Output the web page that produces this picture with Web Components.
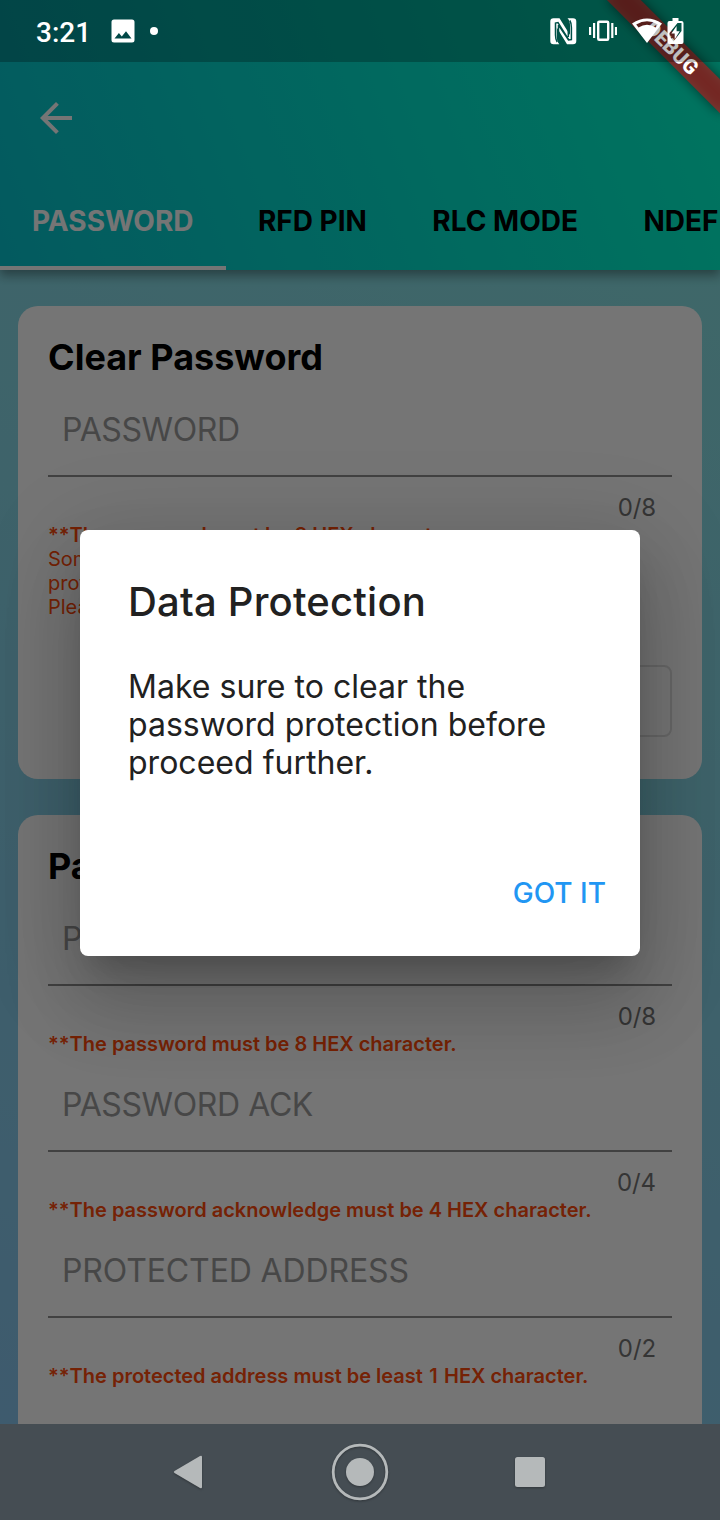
<!DOCTYPE html>
<html lang="en">
<head>
<meta charset="utf-8">
<title>Data Protection</title>
<style>
html,body{margin:0;padding:0}
body{width:720px;height:1520px;overflow:hidden;font-family:Inter,"Liberation Sans",sans-serif;color:#000}
</style>
</head>
<body>
<phone-screen></phone-screen>
<script>
const define = (name, html) => customElements.define(name, class extends HTMLElement {
  constructor() {
    super();
    const t = document.createElement('template');
    t.innerHTML = html;
    this.attachShadow({mode: 'open'}).append(t.content.cloneNode(true));
  }
});

define('status-bar', `
<style>
:host{display:flex;align-items:center;box-sizing:border-box;height:62px;padding:0 36px 0 36px;background:rgba(0,0,0,.25);color:#fff;font:500 28px Roboto,sans-serif}
svg{display:block;flex:none}
.time{width:75px;padding-top:2px}
.dot{width:8px;height:8px;border-radius:50%;background:#fff;margin-left:15px}
.right{display:flex;align-items:center;margin-left:auto}
</style>
<span class="time">3:21</span>
<svg width="24" height="24" viewBox="0 0 24 24" fill="#fff"><path fill-rule="evenodd" d="M3 0.5h18a2.500 2.500 0 0 1 2.500 2.500v18a2.500 2.500 0 0 1-2.500 2.500h-18a2.500 2.500 0 0 1-2.500-2.500v-18a2.500 2.500 0 0 1 2.500-2.500zM3.500 19.500h17l-5.500-7.300-4.200 5.300-2.900-3.500z"/></svg>
<span class="dot"></span>
<span class="right">
<svg width="27" height="27" viewBox="0 0 27 27"><path fill="#fff" d="M3.500 .2H9.500L20 17V8Q20 2.500 17.500 .2H23q3.300 0 3.300 3.200V23q0 3.200-3.300 3.200h-6L6.800 9.500V18Q6.800 24 9.300 26.200H3.500Q.3 26.200.3 23V3.400Q.3.200 3.500.2z"/><path fill="none" stroke="#005048" stroke-width="1.500" d="M7.200 24Q5.500 21.500 5.500 17V5L8 4.500L18.500 21.500M8.500 7V20.500M18.300 5V19M19.800 2.500Q21.400 5 21.400 9.500V21.500L18.500 22L8.500 7"/></svg>
<svg style="margin-left:12px" width="28" height="22" viewBox="0 0 28 22" fill="none" stroke="#fff"><rect x="9.200" y="1.700" width="10" height="18" rx="1" stroke-width="2.400"/><path stroke-width="2.200" d="M5.100 3v15M1.100 7v8M23.300 3v15M27 7v8"/></svg>
<svg style="margin-left:14px" width="32" height="26" viewBox="0 0 32 26"><path fill="#fff" fill-rule="evenodd" d="M1 5.500Q16 -4.500 31 5.500L16 25zM5.200 6.500l2.300 3Q16 4 24.500 9.500l2.300-3Q16 0 5.200 6.500z"/></svg>
<svg style="margin-left:4px" width="17" height="27" viewBox="0 0 17 27"><path fill="#fff" fill-rule="evenodd" d="M5.500 0h6v3h3q2 0 2 2v19q0 2-2 2h-12q-2 0-2-2V5q0-2 2-2h3zM10.500 5L2.500 15v3l4 5.500 8-10.500V5z"/><path fill="#fff" d="M9.600 8L4.400 15.500h3.300v5.800l5-8H9.600z"/></svg>
</span>`);

define('tab-item', `
<style>
:host{display:block;flex:none;box-sizing:border-box;height:96px;padding:28px 33px 0 32.400px;font-weight:700;font-size:28px;line-height:38px;white-space:nowrap}
:host([selected]){padding:28px 32px 0;color:#fff;border-bottom:4px solid #fff}
</style><slot></slot>`);

define('app-header', `
<style>
:host{display:flex;flex-direction:column;justify-content:space-between;position:relative;height:270px;background:linear-gradient(69.4deg,#08c4d0,#00ffcf);box-shadow:0 4px 10px rgba(0,0,0,.3),0 8px 10px rgba(0,0,0,.1)}
.back{margin:102px 0 0 40px;display:block}
nav{display:flex;overflow:hidden}
</style>
<svg class="back" width="32" height="32" viewBox="4 4 16 16" fill="#fff"><path d="M20 11H7.830l5.590-5.590L12 4l-8 8 8 8 1.410-1.410L7.830 13H20v-2z"/></svg>
<nav><tab-item selected>PASSWORD</tab-item><tab-item>RFD PIN</tab-item><tab-item>RLC MODE</tab-item><tab-item>NDEF</tab-item></nav>`);

define('text-field', `
<style>
:host{display:block;height:120px}
.label{box-sizing:border-box;height:76px;padding:9px 14px 0;font-size:32px;letter-spacing:var(--ls,-.4px);line-height:40px;border-bottom:2px solid #8f8f8f;color:#9c9c9c}
.count{text-align:right;padding:16px 16px 0 0;font-size:24px;line-height:30px;letter-spacing:-.1px;color:#747474}
</style>
<div class="label"><slot></slot></div><div class="count"><slot name="count"></slot></div>`);

define('form-note', `
<style>:host{display:block;height:24px;font-size:20px;line-height:24px;font-weight:600;color:#ff4a0c;white-space:nowrap}
:host([plain]){font-weight:400}</style><slot></slot>`);

define('form-card', `
<style>
:host{display:block;box-sizing:border-box;background:#fff;border-radius:20px;padding:30px}
h2{margin:0 0 23px;font-size:36px;line-height:42px;font-weight:700}
</style>
<h2><slot name="title"></slot></h2><slot></slot>`);

define('outline-button', `
<style>:host{display:block;box-sizing:border-box;width:300px;height:72px;margin:46px 0 0 auto;border:2px solid #e0e0e0;border-radius:8px}</style>`);

define('debug-banner', `
<style>
:host{position:absolute;left:720px;top:0;width:0;height:0;transform:rotate(45deg);transform-origin:0 0}
div{position:absolute;left:-80px;top:56px;width:160px;height:24px;background:rgba(183,28,28,.63);text-align:center;color:#fff;font:900 20.400px/24px Roboto,sans-serif}
i{position:absolute;left:-80px;top:56px;width:160px;height:24px;background:rgba(0,0,0,.5);filter:blur(6px)}
</style><i></i><div>DEBUG</div>`);

define('nav-bar', `
<style>
:host{display:flex;align-items:center;height:96px;background:#454d53}
svg{display:block}
</style>
<svg width="720" height="96" viewBox="0 0 720 96" fill="#b5b9ba"><g style="filter:drop-shadow(0 1px 1px rgba(0,0,0,.3))"><path d="M174.500 47L200 32q2-1 2 1v30q0 2-2 1L174.500 49q-1.500-1 0-2z"/><circle cx="360" cy="48" r="14"/><circle cx="360" cy="48" r="26.800" fill="none" stroke="#b5b9ba" stroke-width="2.800"/><rect x="515" y="33" width="30" height="30" rx="2.500"/></g></svg>`);

define('alert-dialog', `
<style>
:host{display:flex;flex-direction:column;box-sizing:border-box;width:560px;height:426px;padding:48px 34px 0 48px;background:#fff;border-radius:8px;color:#212121;box-shadow:0 22px 30px -14px rgba(0,0,0,.2),0 48px 76px 6px rgba(0,0,0,.14),0 18px 92px 16px rgba(0,0,0,.12)}
h1{margin:0;font-weight:500;font-size:40px;line-height:48px;letter-spacing:.2px}
p{margin:42px 0 0;font-size:32px;line-height:38px;letter-spacing:.02px;white-space:nowrap}
.action{margin:94px 0 0 auto;color:#2196f3;font-weight:500;font-size:28px;line-height:34px}
</style>
<h1><slot name="title"></slot></h1><p><slot></slot></p><span class="action"><slot name="action"></slot></span>`);

define('phone-screen', `
<style>
:host{display:block;position:relative;width:720px;height:1520px;overflow:hidden}
main{display:flex;flex-direction:column;height:1424px;overflow:hidden;background:linear-gradient(205deg,#89e6e2,#87c6ef)}
app-header{flex:none}
section{display:flex;flex-direction:column;gap:36px;padding:36px 18px 0}
.first{height:473px}
.second{height:700px}
.wide{--ls:-.12px}
.one{padding:0 1.300px}
text-field + form-note{margin-top:2px}
form-note + text-field{margin-top:20px}
.barrier{position:absolute;inset:0;height:1424px;background:rgba(0,0,0,.54)}
alert-dialog{position:absolute;left:80px;top:530px}
status-bar{position:absolute;left:0;top:0;width:720px}
</style>
<main>
<app-header></app-header>
<section>
<form-card class="first"><span slot="title">Clear Password</span>
<text-field>PASSWORD<span slot="count">0/8</span></text-field>
<form-note>**The password must be 8 HEX character.</form-note>
<form-note plain>Some</form-note><form-note plain>protected</form-note><form-note plain>Please</form-note>
<outline-button></outline-button></form-card>
<form-card class="second"><span slot="title">Password</span>
<text-field>PASSWORD<span slot="count">0/8</span></text-field><form-note>**The password must be 8 HEX character.</form-note>
<text-field>PASSWORD ACK<span slot="count">0/4</span></text-field><form-note>**The password acknowledge must be 4 HEX character.</form-note>
<text-field class="wide">PROTECTED ADDRESS<span slot="count">0/2</span></text-field><form-note>**The protected address must be least <span class="one">1</span> HEX character.</form-note>
</form-card>
</section>
</main>
<nav-bar></nav-bar>
<div class="barrier"></div>
<alert-dialog><span slot="title">Data Protection</span>Make sure to clear the<br>password protection before<br>proceed further.<span slot="action">GOT IT</span></alert-dialog>
<debug-banner></debug-banner>
<status-bar></status-bar>`);
</script>
</body>
</html>
